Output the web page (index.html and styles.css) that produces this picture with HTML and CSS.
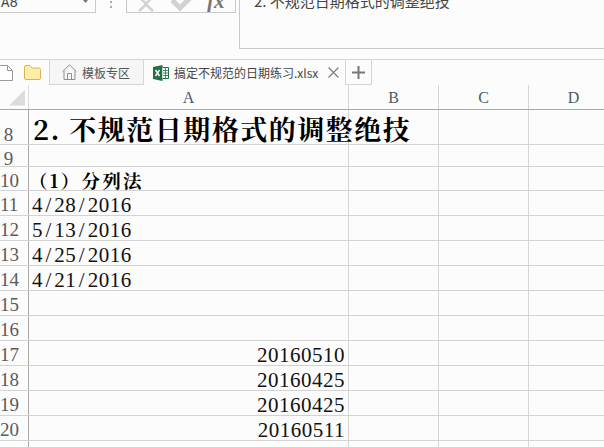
FILE: index.html
```html
<!DOCTYPE html>
<html lang="zh">
<head>
<meta charset="utf-8">
<title>搞定不规范的日期练习.xlsx</title>
<link rel="stylesheet" href="styles.css">
</head>
<body>
<div class="top">
  <div class="namebox"><span class="nametext">A8</span><svg class="caret" width="7" height="4" viewBox="0 0 7 4"><path d="M1 0 L3.5 3 L6 0Z" fill="#777"/></svg></div>
  <div class="dots"><i></i><i></i></div>
  <div class="fxbox">
    <svg class="fxicon" width="20" height="12" viewBox="0 0 20 12"><path d="M2 -4 L11 4.5 M18 -4 L9 4.5 M3 11 L10 4.5 L17 11" fill="none" stroke="#d2d2d2" stroke-width="2.4"/></svg>
    <svg class="fxicon check" width="24" height="12" viewBox="0 0 24 12"><path d="M1 0 L9 8 L22 -5" fill="none" stroke="#d2d2d2" stroke-width="5"/></svg>
    <span class="fxtext">fx</span>
  </div>
  <div class="formula"><span class="formulatext">2. 不规范日期格式的调整绝技</span></div>
</div>
<div class="tabs">
  <svg class="doc" width="14" height="16" viewBox="0 0 14 16"><path d="M-2 .5 H7.5 L12.5 5.5 V15.5 H-2 M7.5 .5 V5.5 H12.5" fill="#fff" stroke="#9a9a9a"/></svg>
  <svg class="folder" width="17" height="15" viewBox="0 0 17 15"><path d="M.5 2 Q.5 .5 2 .5 H6 L8 3 H15 Q16.5 3 16.5 4.5 V13 Q16.5 14.5 15 14.5 H2 Q.5 14.5 .5 13Z" fill="#fdeeaa" stroke="#dcb252"/></svg>
  <div class="tab home">
    <svg width="15" height="16" viewBox="0 0 15 16"><path d="M.7 7.5 L7.5 .8 L14.3 7.5 M2 6.5 V15.5 H13 V6.5 M5.5 15.5 V9.5 H9.5 V15.5" fill="none" stroke="#8f8f8f"/></svg>
    <span>模板专区</span>
  </div>
  <div class="tab active">
    <svg width="16" height="16" viewBox="0 0 16 16"><path d="M0 2 L9.500 0 V16 L0 14Z" fill="#1f7244"/><path d="M9.500 2.500 H15.500 V13.500 H9.500" fill="#fff" stroke="#1f7244"/><path d="M10 5.500 H15 M10 8 H15 M10 10.500 H15 M12.500 3 V13" stroke="#1f7244" stroke-width=".8"/><path d="M2.500 5 L6.500 11 M6.500 5 L2.500 11" stroke="#fff" stroke-width="1.400"/></svg>
    <span class="tabname">搞定不规范的日期练习.xlsx</span>
    <svg class="close" width="11" height="11" viewBox="0 0 11 11"><path d="M.5 .5 L10.500 10.500 M10.500 .5 L.5 10.500" stroke="#777" stroke-width="1.100"/></svg>
  </div>
  <div class="tab plus"><svg width="13" height="13" viewBox="0 0 13 13"><path d="M0 6.500 H13 M6.500 0 V13" stroke="#777" stroke-width="2"/></svg></div>
</div>
<div class="sheet">
  <div class="row head">
    <div class="rh corner"><svg width="17" height="17" viewBox="0 0 17 17"><path d="M0 17 L17 0 V17Z" fill="#dcdcdc"/></svg></div>
    <div class="col a ch">A</div><div class="col ch">B</div><div class="col ch">C</div><div class="col ch">D</div>
  </div>
  <div class="row r8"><div class="rh">8</div><div class="col a title"><b>2. 不规范日期格式的调整绝技</b></div><div class="col"></div><div class="col"></div><div class="col"></div></div>
  <div class="row r9"><div class="rh">9</div><div class="col a"></div><div class="col"></div><div class="col"></div><div class="col"></div></div>
  <div class="row r10"><div class="rh">10</div><div class="col a sub"><b>（1）分列法</b></div><div class="col"></div><div class="col"></div><div class="col"></div></div>
  <div class="row"><div class="rh">11</div><div class="col a date">4<i>/</i>28<i>/</i>2016</div><div class="col"></div><div class="col"></div><div class="col"></div></div>
  <div class="row"><div class="rh">12</div><div class="col a date">5<i>/</i>13<i>/</i>2016</div><div class="col"></div><div class="col"></div><div class="col"></div></div>
  <div class="row"><div class="rh">13</div><div class="col a date">4<i>/</i>25<i>/</i>2016</div><div class="col"></div><div class="col"></div><div class="col"></div></div>
  <div class="row"><div class="rh">14</div><div class="col a date">4<i>/</i>21<i>/</i>2016</div><div class="col"></div><div class="col"></div><div class="col"></div></div>
  <div class="row"><div class="rh">15</div><div class="col a"></div><div class="col"></div><div class="col"></div><div class="col"></div></div>
  <div class="row"><div class="rh">16</div><div class="col a"></div><div class="col"></div><div class="col"></div><div class="col"></div></div>
  <div class="row"><div class="rh">17</div><div class="col a num">20160510</div><div class="col"></div><div class="col"></div><div class="col"></div></div>
  <div class="row"><div class="rh">18</div><div class="col a num">20160425</div><div class="col"></div><div class="col"></div><div class="col"></div></div>
  <div class="row"><div class="rh">19</div><div class="col a num">20160425</div><div class="col"></div><div class="col"></div><div class="col"></div></div>
  <div class="row"><div class="rh">20</div><div class="col a num">20160511</div><div class="col"></div><div class="col"></div><div class="col"></div></div>
  <div class="row"><div class="rh"></div><div class="col a"></div><div class="col"></div><div class="col"></div><div class="col"></div></div>
</div>
</body>
</html>
```
FILE: styles.css
```css
html, body {
  margin: 0;
  height: 447px;
  overflow: hidden;
  background: #fcfcfc;
  font-family: "Noto Serif CJK SC", "Liberation Serif", "Noto Sans CJK SC", serif;
}
.top {
  display: flex;
  align-items: flex-start;
  height: 59px;
  box-sizing: border-box;
}
.namebox {
  width: 96px;
  height: 13px;
  flex: none;
  box-sizing: border-box;
  display: flex;
  justify-content: space-between;
  border: solid #c9c9c9;
  border-width: 0 1px 1px 0;
  overflow: hidden;
}
.nametext {
  font: 14px/14px "Liberation Mono", monospace;
  color: #444;
  margin: -4px 0 0 1px;
}
.caret { margin: 0 6px 0 0; }
.dots {
  width: 30px;
  flex: none;
  display: flex;
  flex-direction: column;
  align-items: center;
  gap: 3px;
  padding-top: 1px;
}
.dots i { width: 2px; height: 2px; background: #aaa; }
.fxbox {
  width: 110px;
  height: 13px;
  flex: none;
  box-sizing: border-box;
  display: flex;
  align-items: flex-start;
  border: solid #c9c9c9;
  border-width: 0 1px 1px;
  overflow: hidden;
  padding-left: 9px;
}
.check { margin-left: 15px; }
.fxtext {
  font: italic bold 21px/21px "Liberation Serif", serif;
  color: #777;
  margin: -9px 0 0 12px;
}
.formula {
  flex: 1;
  height: 49px;
  margin-left: 3px;
  box-sizing: border-box;
  border: solid #c9c9c9;
  border-width: 0 0 1px 1px;
  overflow: hidden;
  padding-left: 14px;
}
.formulatext {
  display: block;
  font: 15px/18px "Noto Sans CJK SC", sans-serif;
  color: #444;
  margin-top: -8px;
}
.tabs {
  display: flex;
  align-items: stretch;
  height: 26px;
  box-sizing: border-box;
  border-top: 1px solid #d6d6d6;
}
.doc { margin: 5px 0 0 0; flex: none; }
.folder { margin: 5px 0 0 10px; flex: none; }
.tab {
  display: flex;
  align-items: center;
  box-sizing: border-box;
  border-right: 1px solid #d6d6d6;
  font: 12px "Noto Sans CJK SC", sans-serif;
  color: #555;
}
.home {
  width: 95px;
  margin-left: 8px;
  padding-left: 12px;
  gap: 5px;
  background: #f6f6f6;
  border-left: 1px solid #d6d6d6;
  border-bottom: 1px solid #d6d6d6;
  font-size: 12px;
}
.active {
  width: 202px;
  padding-left: 9px;
  background: #fcfcfc;
  color: #444;
  font-size: 12px;
}
.tabname { margin-left: 5px; white-space: nowrap; }
.close { margin-left: 10px; flex: none; }
.plus {
  width: 26px;
  justify-content: center;
  border-bottom: 1px solid #d6d6d6;
}
.sheet { display: flex; flex-direction: column; }
.row {
  display: flex;
  height: 25px;
  flex: none;
  box-sizing: border-box;
  border-bottom: 1px solid #d2d2d2;
}
.head { border-bottom: 1px solid #a8a8a8; }
.r8 { height: 35px; }
.r9 { height: 22px; }
.r10 { height: 24px; }
.rh {
  width: 29px;
  flex: none;
  box-sizing: border-box;
  border-right: 1px solid #a8a8a8;
  font: 19px/28px "Liberation Serif", serif;
  color: #5a5a5a;
  padding-right: 11px;
  text-align: center;
  white-space: nowrap;
}
.r8 .rh { line-height: 50px; }
.corner {
  border-right-color: #dcdcdc;
  display: flex;
  align-items: flex-end;
  padding: 0 3px 3px 9px;
}
.col {
  width: 90px;
  flex: none;
  box-sizing: border-box;
  border-right: 1px solid #d6d6d6;
}
.col.a { width: 320px; white-space: nowrap; }
.ch {
  font: 16px/25px "Liberation Serif", serif;
  color: #4a5a6a;
  text-align: center;
}
.title {
  padding-left: 4px;
  font-size: 27px;
  line-height: 38px;
  letter-spacing: 1.5px;
  color: #000;
}
.sub {
  padding-left: 0;
  font-size: 18.5px;
  line-height: 26px;
  letter-spacing: 2.3px;
  color: #000;
}
.date, .num {
  font-family: "Liberation Serif", serif;
  font-size: 21px;
  line-height: 28px;
  letter-spacing: .5px;
  color: #111;
}
.date { padding-left: 3px; }
.date i { font-style: normal; padding: 0 2.5px; }
.num { text-align: right; padding-right: 3px; }
```
